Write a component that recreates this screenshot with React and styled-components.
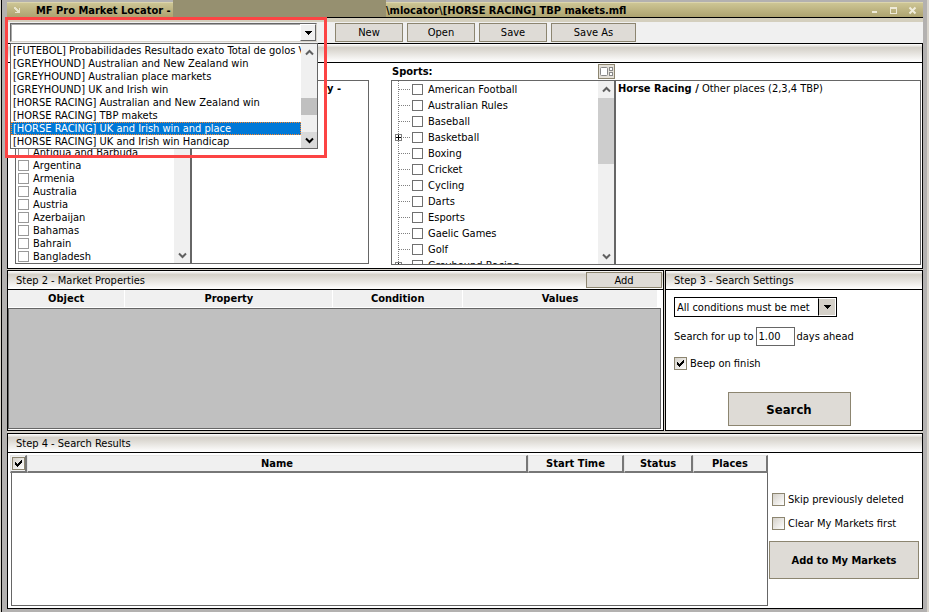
import React, { useState } from "react";
import styled, { createGlobalStyle, css } from "styled-components";

const savedSearches = [
  "[FUTEBOL] Probabilidades Resultado exato Total de golos Vã",
  "[GREYHOUND] Australian and New Zealand win",
  "[GREYHOUND] Australian place markets",
  "[GREYHOUND] UK and Irish win",
  "[HORSE RACING] Australian and New Zealand win",
  "[HORSE RACING] TBP makets",
  "[HORSE RACING] UK and Irish win and place",
  "[HORSE RACING] UK and Irish win Handicap",
];

const countries = [
  "Antigua and Barbuda",
  "Argentina",
  "Armenia",
  "Australia",
  "Austria",
  "Azerbaijan",
  "Bahamas",
  "Bahrain",
  "Bangladesh",
];

const sports = [
  { name: "American Football" },
  { name: "Australian Rules" },
  { name: "Baseball" },
  { name: "Basketball", children: true },
  { name: "Boxing" },
  { name: "Cricket" },
  { name: "Cycling" },
  { name: "Darts" },
  { name: "Esports" },
  { name: "Gaelic Games" },
  { name: "Golf" },
  { name: "Greyhound Racing", children: true },
];

const Chevron = ({ up, color = "#606060" }) => (
  <svg width="9" height="7" viewBox="0 0 9 7" aria-hidden="true">
    <path d={up ? "M1 5.5 4.5 2 8 5.5" : "M1 1.5 4.5 5 8 1.5"} fill="none" stroke={color} strokeWidth="2" />
  </svg>
);

const Triangle = () => (
  <svg width="7" height="4" viewBox="0 0 7 4" shapeRendering="crispEdges" aria-hidden="true">
    <path d="M0 0h7v1H6v1H5v1H4v1H3V3H2V2H1V1H0z" fill="#000" />
  </svg>
);

const ScrollBar = ({ thumbTop, thumbHeight, pressed }) => (
  <Scroll>
    <ScrollButton type='button' aria-label='Scroll up'>
      <Chevron up />
    </ScrollButton>
    <Track>
      <Thumb $top={thumbTop} $height={thumbHeight} $dark={pressed} />
    </Track>
    <ScrollButton type='button' aria-label='Scroll down' $pressed={pressed}>
      <Chevron color={pressed ? "#000" : undefined} />
    </ScrollButton>
  </Scroll>
);

const CheckBox = (props) => (
  <CheckWrap>
    <Check type='checkbox' {...props} />
    <svg width="7" height="7" viewBox="0 0 7 7" shapeRendering="crispEdges" aria-hidden="true">
      <path d="M0 2h1v1h1v1h1V3h1V2h1V1h1V0h1v3H6v1H5v1H4v1H3v1H2V6H1V5H0z" fill="#000" />
    </svg>
  </CheckWrap>
);

const App = () => {
  const [selected, setSelected] = useState(6);
  return (
    <>
      <GlobalStyle />
      <Desktop>
        <Window>
          <TitleBar>
            <svg width="7" height="7" viewBox="0 0 7 7" shapeRendering="crispEdges" aria-hidden="true">
              <path d="M0 0h2v1h1v1h1v1h1V1h1v5H1V5h2V4H2V3H1V2H0z" fill="#e8e4cc" />
            </svg>
            <TitleText>MF Pro Market Locator -</TitleText>
            <Redacted />
            <FileName>\mlocator\[HORSE RACING] TBP makets.mfl</FileName>
            <WindowButtons>
              <WindowButton type='button' aria-label='Minimize'>
                <svg width="9" height="9" viewBox="0 0 9 9" shapeRendering="crispEdges">
                  <path d="M2 5h5v2H2z" fill="#eeead8" />
                </svg>
              </WindowButton>
              <WindowButton type='button' aria-label='Maximize'>
                <svg width="9" height="9" viewBox="0 0 9 9" shapeRendering="crispEdges">
                  <path d="M1.5 1.5h6v6h-6zM1 2.5h7" fill="none" stroke="#eeead8" />
                </svg>
              </WindowButton>
              <WindowButton type='button' aria-label='Close'>
                <svg width="9" height="9" viewBox="0 0 9 9">
                  <path d="M1.5 1.5l6 6M7.5 1.5l-6 6" fill="none" stroke="#f0eddc" strokeWidth="2" />
                </svg>
              </WindowButton>
            </WindowButtons>
          </TitleBar>

          <Toolbar>
            <ComboArea>
              <ComboSelect aria-label='Saved searches' defaultValue=''>
                <option value=''></option>
              </ComboSelect>
              <ComboArrow>
                <Triangle />
              </ComboArrow>
              <Popup>
                <Options role='listbox' aria-label='Saved search files'>
                  {savedSearches.map((search, index) => (
                    <Option
                      key={search}
                      role='option'
                      aria-selected={index === selected}
                      $selected={index === selected}
                      onClick={() => setSelected(index)}
                    >
                      {search}
                    </Option>
                  ))}
                </Options>
                <ScrollBar thumbTop={38} thumbHeight={17} pressed />
              </Popup>
              <Highlight />
            </ComboArea>
            <Button type='button'>New</Button>
            <Button type='button'>Open</Button>
            <Button type='button'>Save</Button>
            <Button type='button' $wide>Save As</Button>
          </Toolbar>

          <Panel>
            <PanelHeader />
            <MarketBody>
              <CountryGroup>
                <ListBox>
                  <CheckList>
                    {countries.map((country) => (
                      <CountryRow key={country}>
                        <ListCheck type='checkbox' />
                        {country}
                      </CountryRow>
                    ))}
                  </CheckList>
                  <ScrollBar thumbTop={0} thumbHeight={40} />
                </ListBox>
                <ResultBox>
                  <Offset>
                    <b>ly -</b>
                  </Offset>
                </ResultBox>
              </CountryGroup>
              <SportGroup>
                <SportLabel>
                  <b>Sports:</b>
                  <LayoutButton type='button' aria-label='Change layout'>
                    <svg width="15" height="13" viewBox="0 0 15 13" aria-hidden="true">
                      <rect x="1.5" y="2.5" width="7" height="8" rx="1" fill="#fff" stroke="#888" />
                      <rect x="10.5" y="2.5" width="3" height="3" fill="#fff" stroke="#888" />
                      <rect x="10.5" y="7.5" width="3" height="3" fill="#fff" stroke="#888" />
                    </svg>
                  </LayoutButton>
                </SportLabel>
                <ListBox>
                  <Tree>
                    {sports.map((sport) => (
                      <SportRow key={sport.name}>
                        <Branch width="16" height="16" viewBox="0 0 16 16" shapeRendering="crispEdges">
                          <path d="M3.5 0v16M4 8.5h12" stroke="#808080" strokeDasharray="1 1" />
                          {sport.children && (
                            <>
                              <rect x="0.5" y="5.5" width="6" height="6" fill="#fff" stroke="#808080" />
                              <path d="M1 8.5h5M3.5 6v5" stroke="#000" />
                            </>
                          )}
                        </Branch>
                        <ListCheck type='checkbox' $dark />
                        {sport.name}
                      </SportRow>
                    ))}
                  </Tree>
                  <ScrollBar thumbTop={1} thumbHeight={66} />
                </ListBox>
                <ResultBox>
                  <b>Horse Racing /</b> Other places (2,3,4 TBP)
                </ResultBox>
              </SportGroup>
            </MarketBody>
          </Panel>

          <Middle>
            <Panel>
              <PanelHeader>
                <span>Step 2 - Market Properties</span>
                <AddButton type='button'>Add</AddButton>
              </PanelHeader>
              <PropertyTable>
                <colgroup>
                  <col width='18%' />
                  <col width='32%' />
                  <col width='20%' />
                  <col width='30%' />
                </colgroup>
                <thead>
                  <tr>
                    <th>Object</th>
                    <th>Property</th>
                    <th>Condition</th>
                    <th>Values</th>
                  </tr>
                </thead>
              </PropertyTable>
              <PropertyArea />
            </Panel>
            <Panel>
              <PanelHeader>
                <span>Step 3 - Search Settings</span>
              </PanelHeader>
              <Settings>
                <SelectWrap>
                  <ConditionSelect aria-label='Conditions' defaultValue='all'>
                    <option value='all'>All conditions must be met</option>
                  </ConditionSelect>
                  <ConditionArrow>
                    <Triangle />
                  </ConditionArrow>
                </SelectWrap>
                <DaysRow>
                  <label htmlFor='days'>Search for up to</label>
                  <DaysInput id='days' type='text' defaultValue='1.00' />
                  <span>days ahead</span>
                </DaysRow>
                <CheckLabel>
                  <CheckBox defaultChecked />
                  Beep on finish
                </CheckLabel>
                <SearchButton type='button'>Search</SearchButton>
              </Settings>
            </Panel>
          </Middle>

          <ResultsPanel>
            <PanelHeader>
              <span>Step 4 - Search Results</span>
            </PanelHeader>
            <ResultsBody>
              <ResultsArea>
                <ResultsTable>
                  <colgroup>
                    <col width='17' />
                    <col />
                    <col width='96' />
                    <col width='69' />
                    <col width='75' />
                  </colgroup>
                  <thead>
                    <tr>
                      <th>
                        <CheckBox aria-label='Select all' defaultChecked />
                      </th>
                      <th>Name</th>
                      <th>Start Time</th>
                      <th>Status</th>
                      <th>Places</th>
                    </tr>
                  </thead>
                </ResultsTable>
                <ResultsList />
              </ResultsArea>
              <Actions>
                <CheckLabel>
                  <CheckBox />
                  Skip previously deleted
                </CheckLabel>
                <CheckLabel>
                  <CheckBox />
                  Clear My Markets first
                </CheckLabel>
                <AddMarketsButton type='button'>Add to My Markets</AddMarketsButton>
              </Actions>
            </ResultsBody>
          </ResultsPanel>
        </Window>
      </Desktop>
    </>
  );
};
export default App;

const GlobalStyle = createGlobalStyle`
  * {
    box-sizing: border-box;
  }
  body {
    margin: 0;
  }
  body, button, input, select {
    font-family: "DejaVu Sans Condensed", "DejaVu Sans", sans-serif;
    font-size: 11px;
    line-height: 13px;
    color: #000;
  }
`;

const Desktop = styled.div`
  min-height: 100vh;
  display: flex;
  background: #d8d4cc;
  padding: 0 2px;
`;

const Window = styled.main`
  flex: 1;
  min-width: 0;
  display: flex;
  flex-direction: column;
  background: #d4d0c8;
  border: solid #b3b1b0;
  border-width: 2px 4px 3px 5px;
  box-shadow: -1px 0 #000;
`;

const TitleBar = styled.header`
  display: flex;
  align-items: center;
  height: 16px;
  padding-left: 7px;
  background: linear-gradient(#cdc594, #ada370);
  border-top: 1px solid #dcd5ad;
  border-bottom: 1px solid #000;
  font-weight: bold;
  white-space: nowrap;
`;

const TitleText = styled.span`
  flex: none;
  width: 152px;
  padding-left: 15px;
`;

const Redacted = styled.span`
  flex: none;
  width: 213px;
  height: 18px;
  margin-top: -4px;
  background: #969070;
`;

const FileName = styled.span`
  flex: 1;
`;

const WindowButtons = styled.div`
  display: flex;
  gap: 10px;
  padding-right: 6px;
`;

const WindowButton = styled.button`
  display: flex;
  padding: 0;
  border: 0;
  background: none;
`;

const Toolbar = styled.div`
  display: flex;
  align-items: center;
  gap: 4px;
  height: 25px;
  padding: 1px 3px;
  background: #f0f0f0;
  border-top: 4px solid #d4cfbe;
`;

const ComboArea = styled.div`
  position: relative;
  width: 307px;
  margin-right: 14px;
`;

const ComboSelect = styled.select`
  display: block;
  width: 100%;
  height: 19px;
  appearance: none;
  background: #fff;
  border: 1px solid #666;
  border-right-color: #d8d4cc;
  border-bottom-color: #d8d4cc;
  border-radius: 0;
  box-shadow: inset 1px 1px #aaa;
`;

const ComboArrow = styled.span`
  position: absolute;
  top: 1px;
  right: 1px;
  width: 16px;
  height: 17px;
  display: flex;
  align-items: center;
  justify-content: center;
  background: #f0f0f0;
  border: 1px solid #fff;
  border-right-color: #666;
  border-bottom-color: #666;
  pointer-events: none;
`;

const Popup = styled.div`
  position: absolute;
  z-index: 2;
  top: 20px;
  left: 0;
  width: 308px;
  display: flex;
  background: #fff;
  border: 1px solid #666;
`;

const Options = styled.ul`
  flex: 1;
  min-width: 0;
  margin: 0;
  padding: 0;
  list-style: none;
`;

const Option = styled.li`
  height: 13px;
  padding-left: 2px;
  overflow: hidden;
  white-space: nowrap;
  cursor: default;
  ${({ $selected }) =>
    $selected &&
    css`
      background: #0078d7;
      color: #fff;
      outline: 1px dotted #ff8728;
      outline-offset: -1px;
    `}
`;

/* marker frame drawn round the open list */
const Highlight = styled.div`
  position: absolute;
  z-index: 3;
  top: -6px;
  left: -5px;
  width: 322px;
  height: 141px;
  border: 3px solid #fc4444;
  pointer-events: none;
`;

const Scroll = styled.div`
  flex: none;
  display: flex;
  flex-direction: column;
  width: 16px;
  background: #f0f0f0;
`;

const ScrollButton = styled.button`
  display: flex;
  align-items: center;
  justify-content: center;
  height: 16px;
  padding: 0;
  border: 0;
  background: ${({ $pressed }) => ($pressed ? "#dadada" : "#f0f0f0")};
`;

const Track = styled.div`
  flex: 1;
`;

const Thumb = styled.div`
  height: ${({ $height }) => $height}px;
  margin-top: ${({ $top }) => $top}px;
  background: ${({ $dark }) => ($dark ? "#c0c0c0" : "#cdcdcd")};
`;

const Button = styled.button`
  width: ${({ $wide }) => ($wide ? 85 : 68)}px;
  height: 19px;
  padding: 0;
  background: #dedbd6;
  border: 1px solid #8c8570;
`;

const Panel = styled.section`
  display: flex;
  flex-direction: column;
  min-width: 0;
  background: #fff;
  border: 1px solid #000;
`;

const PanelHeader = styled.div`
  display: flex;
  align-items: center;
  justify-content: space-between;
  height: 19px;
  padding-left: 8px;
  background: linear-gradient(#fff, #d4d0c8 20%, #fff);
  border-bottom: 1px solid #000;
`;

const MarketBody = styled.div`
  display: grid;
  grid-template-columns: 354px 1fr;
  gap: 22px;
  padding: 0 1px 3px 7px;
`;

const CountryGroup = styled.div`
  display: grid;
  grid-template-columns: 177px 1fr;
  grid-template-rows: 184px;
  padding-top: 17px;
`;

const SportGroup = styled.div`
  display: grid;
  grid-template-columns: 225px 1fr;
  grid-template-rows: 17px 185px;
`;

const SportLabel = styled.div`
  grid-column: 1 / 3;
  width: 224px;
  display: flex;
  align-items: center;
  justify-content: space-between;
  padding-left: 1px;
`;

const LayoutButton = styled.button`
  display: flex;
  padding: 0;
  background: #e4e0d8;
  border: 1px solid #8c8570;
`;

const ListBox = styled.div`
  display: flex;
  overflow: hidden;
  border: 1px solid #666;
  border-right-width: 2px;
`;

const ResultBox = styled.div`
  padding: 1px 2px;
  border: 1px solid #666;
  border-left: 0;
`;

const Offset = styled.div`
  padding-right: 25px;
  text-align: right;
`;

const CheckList = styled.div`
  flex: 1;
  display: flex;
  flex-direction: column;
  justify-content: flex-end;
`;

const CountryRow = styled.label`
  display: flex;
  align-items: center;
  gap: 4px;
  height: 13px;
  padding-left: 2px;
  white-space: nowrap;
`;

const Tree = styled.div`
  flex: 1;
`;

const SportRow = styled.label`
  display: flex;
  align-items: center;
  gap: 5px;
  height: 16px;
  padding-left: 3px;
  white-space: nowrap;
`;

const Branch = styled.svg`
  flex: none;
  margin-right: -4px;
`;

const ListCheck = styled.input`
  appearance: none;
  flex: none;
  width: 11px;
  height: 11px;
  margin: 0;
  background: #fff;
  border: 1px solid ${({ $dark }) => ($dark ? "#707070" : "#999")};
`;

const Middle = styled.div`
  display: grid;
  grid-template-columns: 657px 1fr;
  gap: 1px;
  padding: 1px 0 2px;
  background: #d4d0c8;
`;

const AddButton = styled(Button)`
  width: 76px;
  height: 16px;
  margin-right: 1px;
`;

const PropertyTable = styled.table`
  table-layout: fixed;
  width: 650px;
  border-collapse: collapse;
  th {
    height: 17px;
    padding: 0;
    background: #f0f0f0;
    border-right: 1px solid #fff;
  }
`;

const PropertyArea = styled.div`
  flex: 1;
  margin: 1px 2px 1px 0;
  background: #c0c0c0;
  border: 1px solid #666;
`;

const Settings = styled.div`
  display: flex;
  flex-direction: column;
  align-items: flex-start;
  padding: 7px 8px 3px;
`;

const SelectWrap = styled.div`
  position: relative;
  width: 163px;
`;

const ConditionSelect = styled.select`
  display: block;
  width: 100%;
  height: 20px;
  padding: 0 2px;
  appearance: none;
  background: #fff;
  border: 1px solid #000;
  border-radius: 0;
`;

const ConditionArrow = styled.span`
  position: absolute;
  top: 1px;
  right: 1px;
  width: 18px;
  height: 18px;
  display: flex;
  align-items: center;
  justify-content: center;
  background: #d4d0c8;
  border: 1px solid #fff;
  border-left-color: #000;
  pointer-events: none;
`;

const DaysRow = styled.div`
  display: flex;
  align-items: center;
  gap: 2px;
  margin: 10px 0 11px;
`;

const DaysInput = styled.input`
  width: 39px;
  height: 19px;
  padding: 0 2px;
  border: 1px solid #666;
`;

const CheckLabel = styled.label`
  display: flex;
  align-items: center;
  gap: 3px;
`;

const CheckWrap = styled.span`
  position: relative;
  flex: none;
  display: inline-flex;
  vertical-align: middle;
  svg {
    position: absolute;
    top: 3px;
    left: 3px;
    visibility: hidden;
    pointer-events: none;
  }
  input:checked + svg {
    visibility: visible;
  }
`;

const Check = styled.input`
  appearance: none;
  width: 13px;
  height: 13px;
  margin: 0;
  background: linear-gradient(135deg, #d4d0c8, #fff);
  border: 1px solid #8c8570;
`;

const SearchButton = styled(Button)`
  align-self: center;
  width: 123px;
  height: 34px;
  margin-top: 22px;
  margin-right: 10px;
  margin-bottom: 1px;
  font-size: 13px;
  font-weight: bold;
`;

const ResultsPanel = styled(Panel)`
  flex: 1;
`;

const ResultsBody = styled.div`
  flex: 1;
  display: flex;
  padding: 2px 3px 2px 2px;
`;

const ResultsArea = styled.div`
  flex: 1;
  display: flex;
  flex-direction: column;
`;

const ResultsTable = styled.table`
  table-layout: fixed;
  width: 100%;
  border-spacing: 0;
  th {
    height: 18px;
    padding: 0;
    background: #f0f0f0;
    border: 1px solid #e4e4e4;
    border-right: 2px solid #777;
    border-bottom: 2px solid #777;
  }
`;

const ResultsList = styled.div`
  flex: 1;
  margin-left: 1px;
  border: 1px solid #666;
  border-top: 0;
`;

const Actions = styled.div`
  display: flex;
  flex-direction: column;
  gap: 11px;
  width: 150px;
  margin-left: 1px;
  padding-top: 38px;
  ${CheckLabel} {
    padding-left: 3px;
  }
`;

const AddMarketsButton = styled(Button)`
  width: 100%;
  height: 38px;
  font-weight: bold;
`;
